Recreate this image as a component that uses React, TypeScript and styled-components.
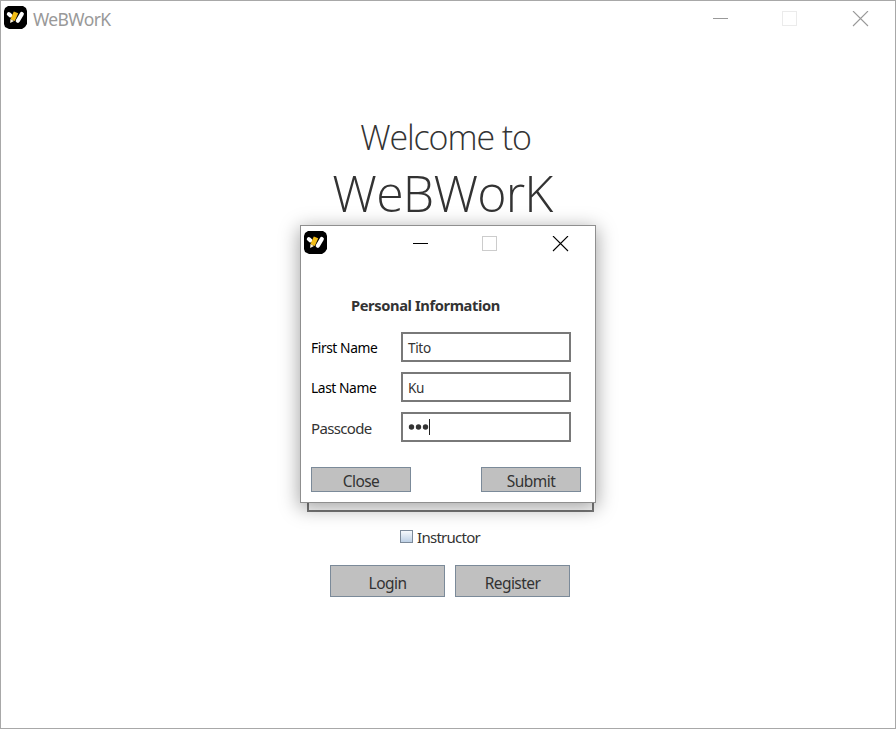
import React from "react";
import styled, { createGlobalStyle } from "styled-components";

const GlobalStyle = createGlobalStyle`
  * { box-sizing: border-box; }
  body { margin: 0; background: #fff; }
`;

const Window = styled.div`
  position: relative;
  display: flex;
  flex-direction: column;
  width: 896px;
  height: 729px;
  overflow: hidden;
  background: #fff;
  border: 1px solid #a8a8a8;
  color: #333;
  font-family: "Noto Sans", "Open Sans", sans-serif;
`;

const TitleBar = styled.header`
  display: flex;
  height: 36px;
  padding: 5px 26px 0 3px;
`;

const WindowTitle = styled.span`
  flex: 1;
  margin-left: 6px;
  font-size: 17.5px;
  line-height: 27px;
  letter-spacing: -0.6px;
  color: #999;
`;

const Controls = styled.div`
  display: flex;
  gap: 54px;
  padding-top: 5px;
  color: #000;
  --box: #ccc;
`;

const DimControls = styled(Controls)`
  color: #999;
  --box: #ebebeb;
`;

const Content = styled.main`
  display: flex;
  flex-direction: column;
  align-items: center;
`;

const Greeting = styled.h2`
  margin: 76px 0 0;
  padding-right: 5px;
  font-family: "Open Sans", sans-serif;
  font-size: 34px;
  line-height: 48px;
  font-weight: 300;
  letter-spacing: -1.1px;
  white-space: nowrap;
`;

const Brand = styled.h1`
  margin: -1px 0 0;
  padding-right: 11px;
  font-family: "Open Sans", sans-serif;
  font-size: 50px;
  line-height: 66px;
  font-weight: 300;
  letter-spacing: -0.8px;
  white-space: nowrap;
`;

const HiddenField = styled.div`
  width: 287px;
  height: 30px;
  margin: 256px 0 0 5px;
  border: 2px solid #797979;
`;

const CheckRow = styled.label`
  display: flex;
  align-items: center;
  gap: 4px;
  height: 20px;
  margin: 15px 0 0 -16px;
  font-size: 15px;
  letter-spacing: -0.75px;
`;

const CheckBox = styled.span`
  width: 13px;
  height: 13px;
  margin-top: -2px;
  border: 1px solid #7c8a9a;
  background: linear-gradient(#f6f9fc, #bdd0e5);
`;

const MainActions = styled.div`
  display: flex;
  gap: 10px;
  margin: 18px 0 0 4px;
`;

const Button = styled.button<{ $large?: boolean }>`
  width: ${(p) => (p.$large ? 115 : 100)}px;
  height: ${(p) => (p.$large ? 32 : 25)}px;
  padding: ${(p) => (p.$large ? 3 : 2)}px 0 0;
  border: 1px solid #7b8a99;
  border-radius: 0;
  background: #c0c0c0;
  color: #333;
  font: 15.5px/20px "Noto Sans", sans-serif;
  letter-spacing: -0.55px;
`;

const Dialog = styled.section`
  position: absolute;
  left: 299px;
  top: 224px;
  display: flex;
  flex-direction: column;
  width: 296px;
  height: 278px;
  border: 1px solid #8f8f8f;
  background: #fff;
  box-shadow: 0 4px 18px 1px rgba(0, 0, 0, 0.36);
`;

const DialogBar = styled(TitleBar)`
  justify-content: space-between;
`;

const Heading = styled.h3`
  margin: 33px 0 0 50px;
  font-size: 14.7px;
  line-height: 20px;
  font-weight: 700;
  letter-spacing: -0.4px;
`;

const Form = styled.div`
  display: grid;
  grid-template-columns: 90px 170px;
  grid-auto-rows: 30px;
  row-gap: 10px;
  margin: 17px 0 0 10px;
`;

const Label = styled.label<{ $soft?: boolean }>`
  font-size: ${(p) => (p.$soft ? 15 : 13.8)}px;
  line-height: 32px;
  letter-spacing: ${(p) => (p.$soft ? -0.65 : -0.42)}px;
  color: ${(p) => (p.$soft ? "#333" : "#000")};
`;

const Field = styled.div`
  display: flex;
  align-items: center;
  height: 30px;
  padding-left: 5px;
  border: 2px solid #797979;
  font-size: 13.6px;
  letter-spacing: -0.35px;
`;

const DialogActions = styled.div`
  display: flex;
  justify-content: space-between;
  margin: 25px 14px 0 10px;
`;

function AppIcon() {
  return (
    <svg width="23" height="23" viewBox="0 0 23 23">
      <path d="M4 0H19L22 2L23 5V18L21 21L18 23H5L1 21L0 18V5L1 2Z" fill="#000" />
      <path d="M4.8 8L6.5 9.5" stroke="#fff" strokeWidth="4" strokeLinecap="round" />
      <path d="M17.8 8L13.8 14.8" stroke="#fff" strokeWidth="4.2" strokeLinecap="round" />
      <path d="M9.8 5.6L14.2 7.2L10.8 15.1L6.4 13.2Z" fill="#f3bd16" />
      <path d="M6.4 13.1L10 15L6.2 17Z" fill="#fff5db" />
    </svg>
  );
}

function ControlIcons() {
  return (
    <>
      <svg width="15" height="16"><path d="M0 7.5H15" stroke="currentColor" /></svg>
      <svg width="16" height="16"><rect x=".5" y=".5" width="14" height="14" fill="none" stroke="var(--box)" /></svg>
      <svg width="17" height="16"><path d="M1 0L16 15M16 0L1 15" stroke="currentColor" strokeWidth="1.1" /></svg>
    </>
  );
}

function PasscodeValue() {
  return (
    <svg width="24" height="18">
      <g fill="#333"><circle cx="3.5" cy="9" r="2.7" /><circle cx="10.5" cy="9" r="2.7" /><circle cx="17.5" cy="9" r="2.7" /></g>
      <path d="M21.5 1V17" stroke="#222" />
    </svg>
  );
}

export default function App() {
  return (
    <>
      <GlobalStyle />
      <Window>
        <TitleBar>
          <AppIcon />
          <WindowTitle>WeBWorK</WindowTitle>
          <DimControls><ControlIcons /></DimControls>
        </TitleBar>
        <Content>
          <Greeting>Welcome to</Greeting>
          <Brand>WeBWorK</Brand>
          <HiddenField />
          <CheckRow><CheckBox />Instructor</CheckRow>
          <MainActions>
            <Button $large>Login</Button>
            <Button $large>Register</Button>
          </MainActions>
        </Content>
        <Dialog>
          <DialogBar>
            <AppIcon />
            <Controls><ControlIcons /></Controls>
          </DialogBar>
          <Heading>Personal Information</Heading>
          <Form>
            <Label>First Name</Label><Field>Tito</Field>
            <Label>Last Name</Label><Field>Ku</Field>
            <Label $soft>Passcode</Label><Field><PasscodeValue /></Field>
          </Form>
          <DialogActions>
            <Button>Close</Button>
            <Button>Submit</Button>
          </DialogActions>
        </Dialog>
      </Window>
    </>
  );
}
